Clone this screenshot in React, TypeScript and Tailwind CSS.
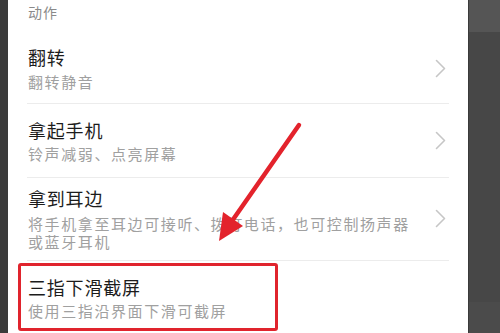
import React from "react";

const font = { fontFamily: '"Noto Sans CJK SC", "Noto Sans", sans-serif' };

function Chevron() {
  return (
    <svg width="11" height="19" viewBox="0 0 11 19" className="mr-[3px] shrink-0">
      <path d="M1.5 1.5 L9.5 9.5 L1.5 17.5" fill="none" stroke="#c6c6c6" strokeWidth="1.6" strokeLinecap="round" strokeLinejoin="round" />
    </svg>
  );
}

export default function App() {
  return (
    <div className="relative flex w-[500px] h-[333px] overflow-hidden bg-white" style={font}>
      <div className="w-[8px] shrink-0 bg-[#3b3b3b]" />
      <div className="flex-1 bg-white">
        <div className="h-[34px] pl-[20px] pt-[2px] text-[14px] leading-[20px] tracking-[1px] text-[#8a8a8a]">动作</div>

        <div className="mx-[19px] flex items-center justify-between border-b border-[#ececec] pt-[11px] pb-[12px]">
          <div className="pl-[1px]">
            <div className="text-[18px] leading-[24px] tracking-[0.8px] text-[#1c1c1c]">翻转</div>
            <div className="mt-[4px] text-[15px] leading-[18px] tracking-[1.6px] text-[#a0a0a0]">翻转静音</div>
          </div>
          <Chevron />
        </div>

        <div className="mx-[19px] flex items-center justify-between border-b border-[#ececec] pt-[14px] pb-[14px]">
          <div className="pl-[1px]">
            <div className="text-[18px] leading-[24px] tracking-[0.8px] text-[#1c1c1c]">拿起手机</div>
            <div className="mt-[3px] text-[15px] leading-[18px] tracking-[1.6px] text-[#a0a0a0]">铃声减弱、点亮屏幕</div>
          </div>
          <Chevron />
        </div>

        <div className="mx-[19px] flex items-center justify-between border-b border-[#ececec] pt-[8px] pb-[9px]">
          <div className="pl-[1px]">
            <div className="text-[18px] leading-[24px] tracking-[0.8px] text-[#1c1c1c]">拿到耳边</div>
            <div className="mt-[5px] w-[390px] text-[15px] leading-[18px] tracking-[1.6px] text-[#a0a0a0]">将手机拿至耳边可接听、拨打电话，也可控制扬声器或蓝牙耳机</div>
          </div>
          <Chevron />
        </div>

        <div className="ml-[10px] mt-[2px] w-[260px] rounded-[3px] border-[3px] border-[#e0242d] pl-[7px] pt-[9px] pb-[8px]">
          <div className="text-[18px] leading-[24px] tracking-[0.8px] text-[#1c1c1c]">三指下滑截屏</div>
          <div className="mt-[3px] text-[15px] leading-[18px] tracking-[1.6px] text-[#a0a0a0]">使用三指沿界面下滑可截屏</div>
        </div>
      </div>
      <div className="flex w-[32px] shrink-0 flex-col border-l border-[#3a3a3a]">
        <div className="h-[32px] bg-[#555555]" />
        <div className="flex-1 bg-[#474747]" />
        <div className="h-[31px] bg-[#4b4b4b]" />
      </div>

      <svg className="pointer-events-none absolute inset-0" width="500" height="333" viewBox="0 0 500 333">
        <line x1="299" y1="125" x2="232" y2="221" stroke="#e3232c" strokeWidth="4.5" strokeLinecap="round" />
        <polygon points="219,241 243,226 223,212" fill="#e3232c" />
      </svg>
    </div>
  );
}
